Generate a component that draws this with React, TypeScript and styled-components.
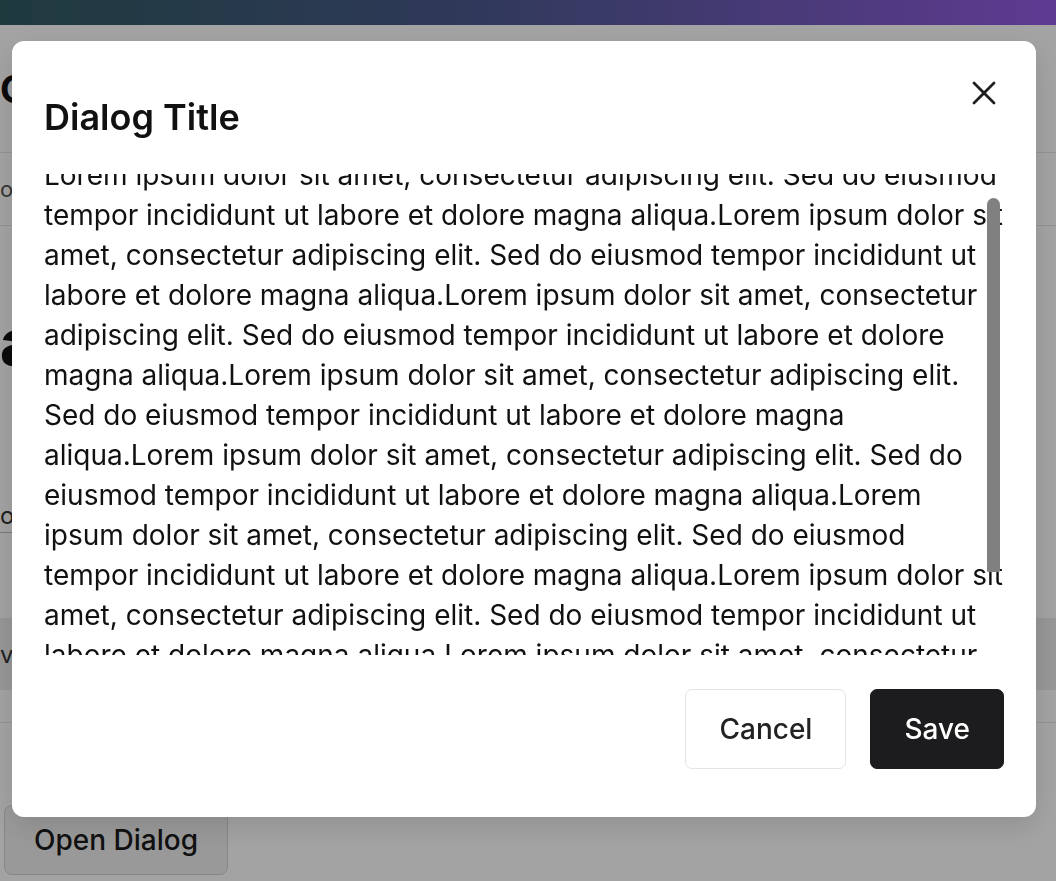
import styled, { createGlobalStyle } from 'styled-components';
import { X } from 'lucide-react';

const LOREM =
  'Lorem ipsum dolor sit amet, consectetur adipiscing elit. Sed do eiusmod tempor incididunt ut labore et dolore magna aliqua.';

const GlobalStyle = createGlobalStyle`
  html, body {
    margin: 0;
    padding: 0;
    height: 100%;
  }
  body {
    font-family: Inter, "Noto Sans", sans-serif;
    background: #ffffff;
    color: #18181b;
    overflow: hidden;
  }
  #root {
    height: 100%;
  }
`;

/* page behind the dialog */

const Page = styled.div`
  min-height: 100vh;
  display: flex;
  flex-direction: column;
`;

const TopBar = styled.header`
  height: 25px;
  flex-shrink: 0;
  background: linear-gradient(90deg, #305c60 0%, #4b5a8e 45%, #955ce4 100%);
`;

const Hero = styled.section`
  height: 128px;
  box-sizing: border-box;
  display: flex;
  align-items: center;
  border-bottom: 1px solid #e5e5e5;
`;

const HeroTitle = styled.h1`
  margin: 0;
  font-size: 38px;
  font-weight: 700;
  color: #111111;
`;

const NavRow = styled.div`
  height: 73px;
  box-sizing: border-box;
  display: flex;
  align-items: center;
  border-bottom: 1px solid #e5e5e5;
  font-size: 22px;
  color: #555555;
`;

const Section = styled.section`
  display: flex;
  flex-direction: column;
  align-items: flex-start;
  padding: 80px 0 32px;
  border-bottom: 1px solid #e5e5e5;
`;

const BigHeading = styled.h2`
  margin: 0;
  font-size: 64px;
  line-height: 72px;
  font-weight: 800;
  color: #111111;
`;

const Caption = styled.p`
  margin: 42px 0 0 30px;
  font-size: 16px;
  line-height: 20px;
  color: #666666;
`;

const FieldLabel = styled.div`
  margin-top: 60px;
  width: 300px;
  line-height: 32px;
  font-size: 24px;
  color: #333333;
  border-bottom: 1px solid #bdbdbd;
`;

const Callout = styled.div`
  margin-top: 85px;
  width: 100%;
  height: 72px;
  display: flex;
  align-items: center;
  background: #ececec;
  font-size: 24px;
  color: #333333;
`;

const PageButton = styled.button`
  align-self: flex-start;
  margin: 82px 0 0 4px;
  height: 70px;
  padding: 0 29px;
  font-family: Inter, sans-serif;
  font-size: 28px;
  font-weight: 500;
  color: #1a1a1a;
  background: #f0f0f0;
  border: 1px solid #d4d4d4;
  border-radius: 8px;
`;

/* dialog */

const Overlay = styled.div`
  position: fixed;
  inset: 0;
  background: rgba(0, 0, 0, 0.36);
  display: flex;
  align-items: flex-start;
  padding: 41px 20px 0 12px;
  box-sizing: border-box;
`;

const DialogBox = styled.div`
  position: relative;
  width: 1024px;
  box-sizing: border-box;
  padding: 54px 32px 48px;
  display: flex;
  flex-direction: column;
  background: #ffffff;
  border-radius: 12px;
  box-shadow: 0 10px 30px rgba(0, 0, 0, 0.12);
`;

const Title = styled.h2`
  margin: 0;
  font-size: 36px;
  line-height: 44px;
  font-weight: 600;
  color: #111111;
`;

const CloseButton = styled.button`
  position: absolute;
  top: 32px;
  right: 32px;
  width: 40px;
  height: 40px;
  padding: 0;
  display: flex;
  align-items: center;
  justify-content: center;
  border: 0;
  background: none;
  color: #1f1f1f;
  cursor: pointer;
`;

const Body = styled.div`
  position: relative;
  margin-top: 35px;
  height: 481px;
  overflow: hidden;
`;

const BodyText = styled.p`
  margin: -19px 0 0;
  font-size: 28px;
  line-height: 40px;
  color: #111111;
`;

const ScrollThumb = styled.div`
  position: absolute;
  top: 24px;
  right: 4px;
  width: 13px;
  height: 374px;
  background: #808080;
  border-radius: 7px 7px 2px 2px;
`;

const Footer = styled.div`
  margin-top: 34px;
  display: flex;
  justify-content: flex-end;
  gap: 24px;
`;

const Button = styled.button<{ $primary?: boolean }>`
  height: 80px;
  padding: 0 33px;
  font-family: Inter, sans-serif;
  font-size: 28px;
  font-weight: 500;
  border-radius: 7px;
  cursor: pointer;
  border: 1px solid ${(p) => (p.$primary ? '#1c1c1e' : '#e4e4e7')};
  background: ${(p) => (p.$primary ? '#1c1c1e' : '#ffffff')};
  color: ${(p) => (p.$primary ? '#ffffff' : '#222222')};
`;

export default function App() {
  return (
    <>
      <GlobalStyle />
      <Page>
        <TopBar />
        <Hero>
          <HeroTitle>Components</HeroTitle>
        </Hero>
        <NavRow>ordered by category</NavRow>
        <Section>
          <BigHeading>a dialog</BigHeading>
          <Caption>- modal example</Caption>
          <FieldLabel>ou</FieldLabel>
          <Callout>vi</Callout>
        </Section>
        <PageButton>Open Dialog</PageButton>
      </Page>

      <Overlay>
        <DialogBox role="dialog" aria-labelledby="dialog-title">
          <Title id="dialog-title">Dialog Title</Title>
          <CloseButton aria-label="Close">
            <X size={40} strokeWidth={1.6} />
          </CloseButton>
          <Body>
            <BodyText>{Array(10).fill(LOREM).join('')}</BodyText>
            <ScrollThumb />
          </Body>
          <Footer>
            <Button>Cancel</Button>
            <Button $primary>Save</Button>
          </Footer>
        </DialogBox>
      </Overlay>
    </>
  );
}
